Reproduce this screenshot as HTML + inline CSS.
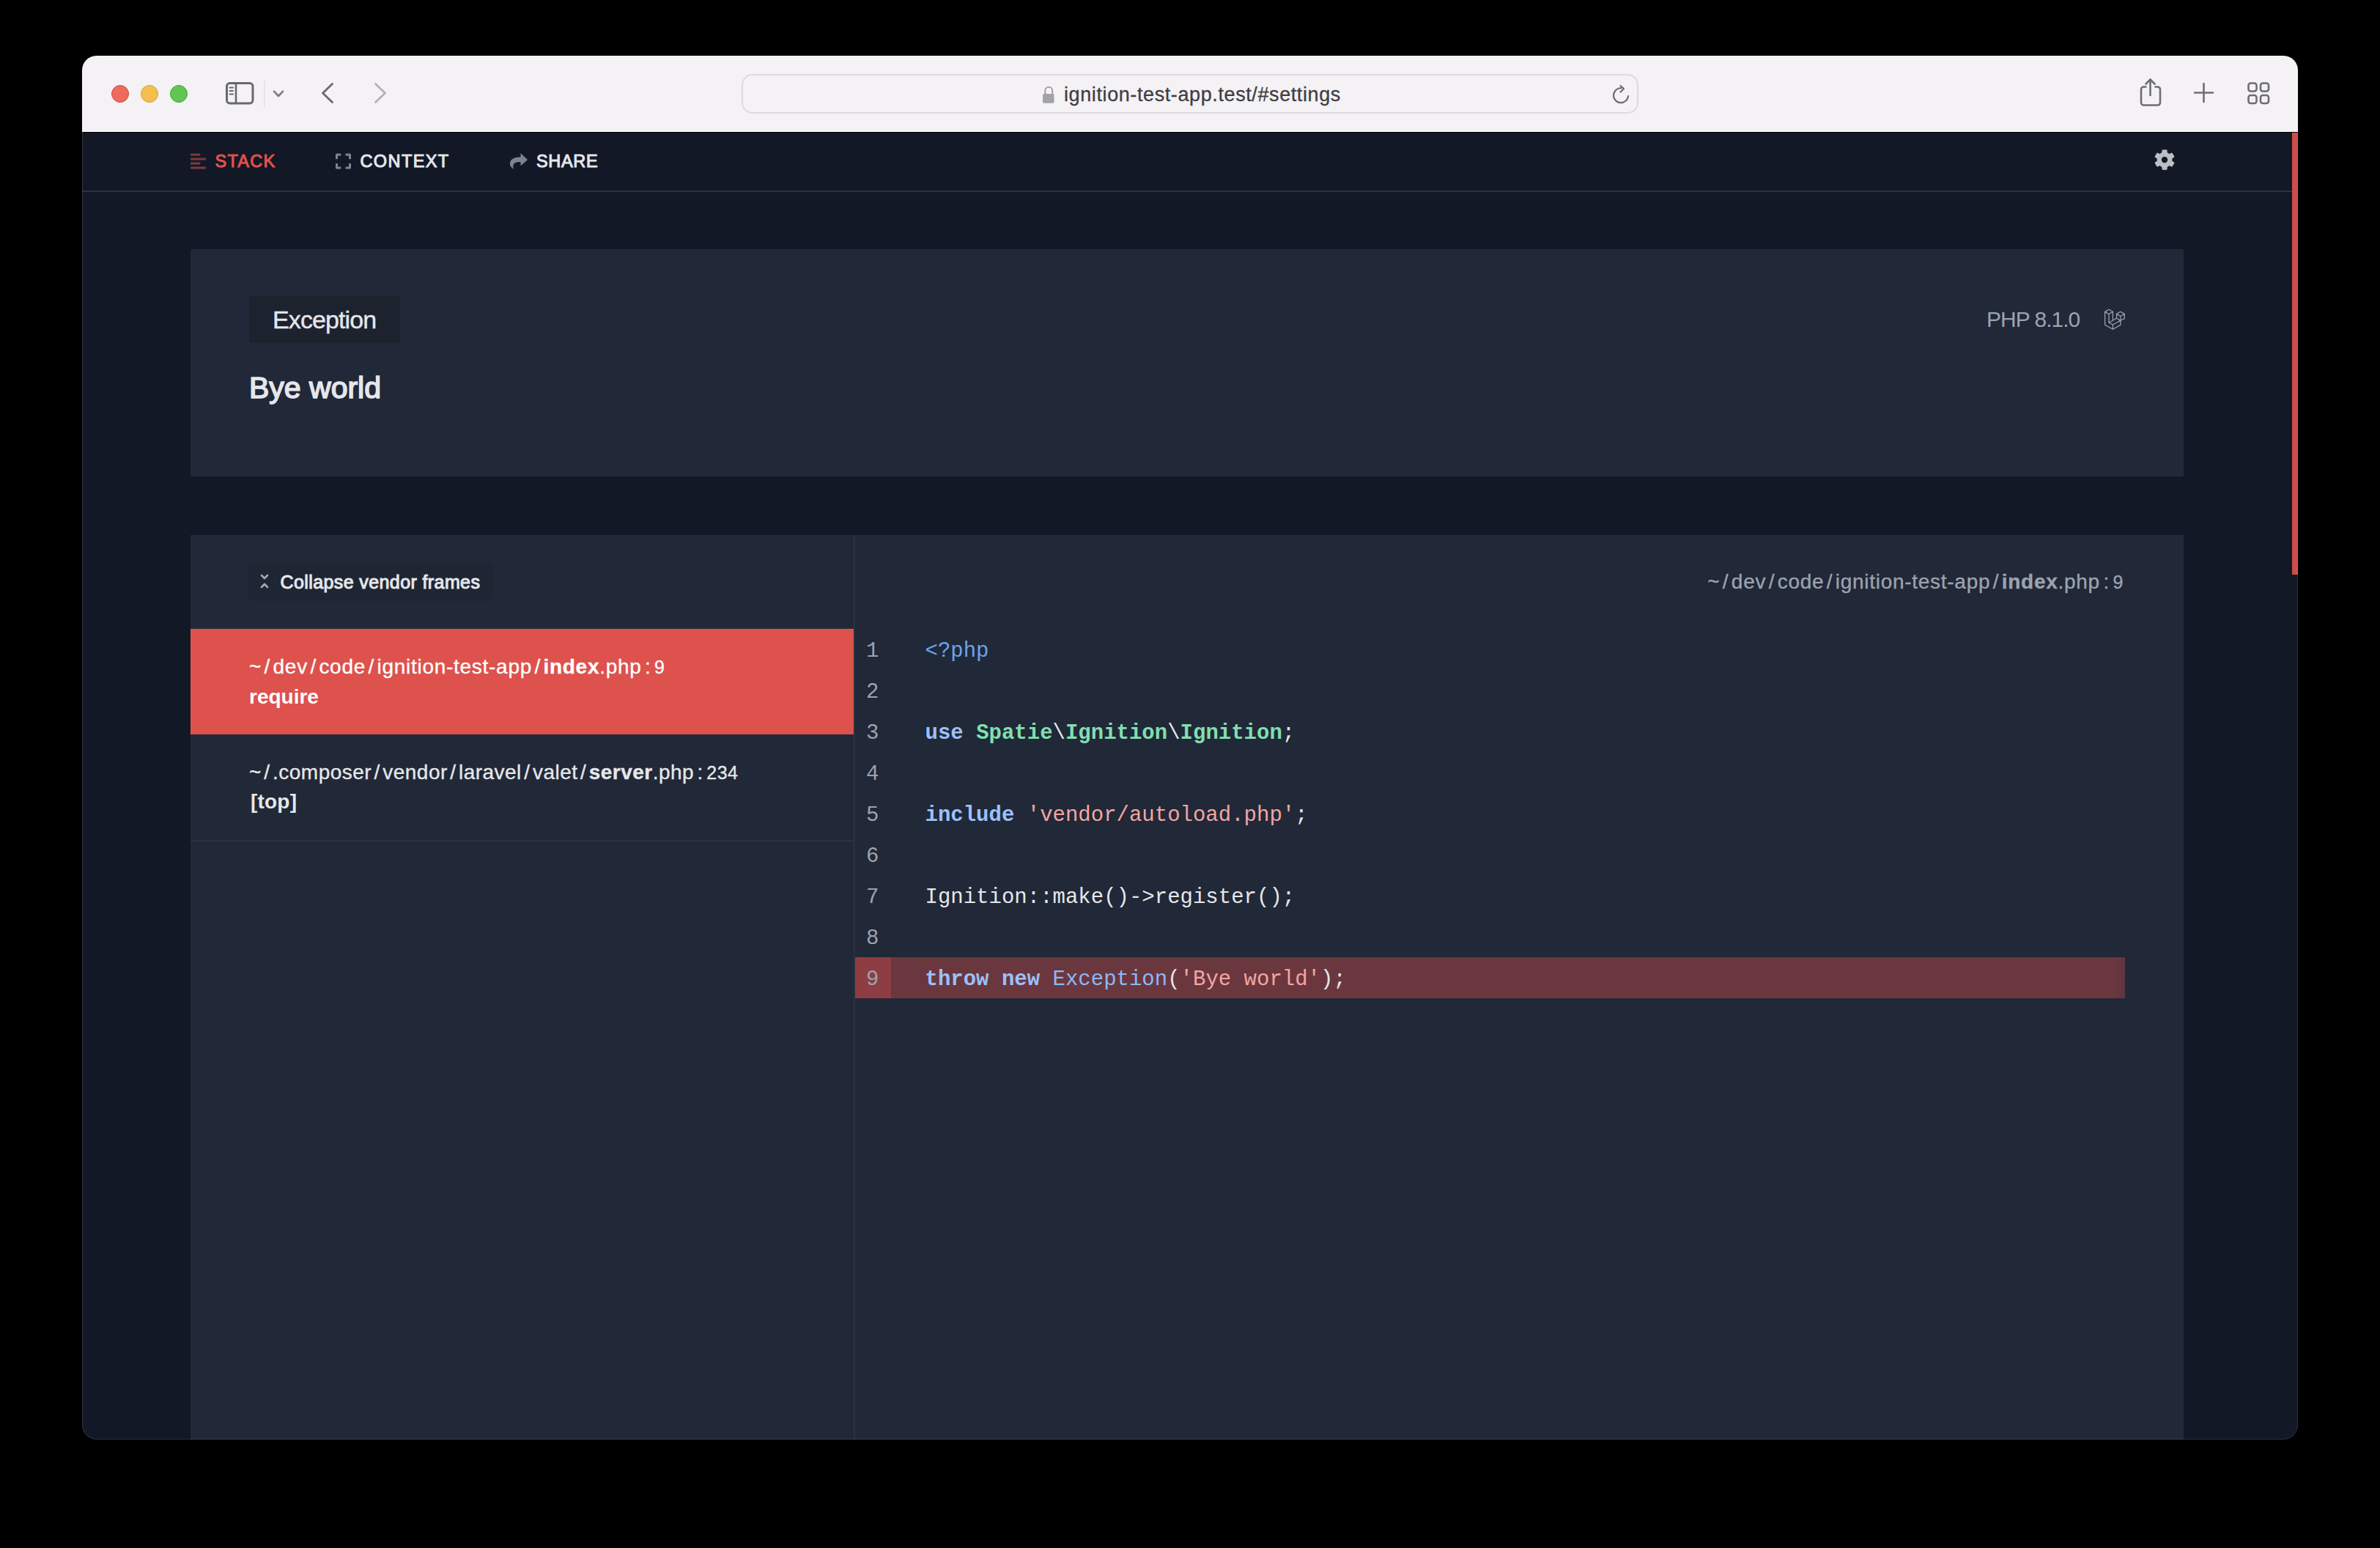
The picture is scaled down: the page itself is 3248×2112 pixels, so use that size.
<!DOCTYPE html>
<html><head><meta charset="utf-8">
<style>
html,body{margin:0;padding:0;background:#000;width:3248px;height:2112px;overflow:hidden}
body{font-family:"Liberation Sans",sans-serif;position:relative}
.a{position:absolute;white-space:pre;line-height:1}
#win{position:absolute;left:112px;top:76px;width:3024px;height:1888px;border-radius:20px;overflow:hidden;background:#121826}
#in{position:absolute;left:-112px;top:-76px;width:3248px;height:2112px}
.bx{position:absolute}
.tl{position:absolute;top:116px;width:24px;height:24px;border-radius:50%;box-sizing:border-box}
.mono{font-family:"Liberation Mono",monospace}
.sl{margin:0 3.5px}
.cl{margin:0 4.5px}
.code{position:absolute;left:1262.5px;font-family:"Liberation Mono",monospace;font-size:29px;line-height:56px;white-space:pre;color:#e5e7eb}
.ln{position:absolute;left:1182px;font-family:"Liberation Mono",monospace;font-size:29px;line-height:56px;color:#9ca3af}
.kw{color:#9bc1fa;font-weight:700}
.cls{color:#80dfb0;font-weight:700}
.str{color:#f2a6a3}
</style></head><body>
<div id="win"><div id="in">
  <!-- toolbar -->
  <div class="bx" style="left:112px;top:76px;width:3024px;height:104px;background:#f4f2f5"></div>
  <div class="tl" style="left:152px;background:#ed6a5e;border:1px solid #d24a3f"></div>
  <div class="tl" style="left:192px;background:#f4bf4f;border:1px solid #d79f33"></div>
  <div class="tl" style="left:232px;background:#61c554;border:1px solid #40a63a"></div>
  <!-- sidebar icon -->
  <svg class="bx" style="left:300px;top:104px" width="100" height="46" viewBox="300 104 100 46">
    <rect x="309.5" y="113.5" width="35.5" height="27.5" rx="4.2" fill="none" stroke="#69686c" stroke-width="3"/>
    <line x1="322" y1="113" x2="322" y2="141" stroke="#69686c" stroke-width="2.6"/>
    <g stroke="#69686c" stroke-width="2" stroke-linecap="round"><line x1="313.5" y1="119.5" x2="318" y2="119.5"/><line x1="313.5" y1="124" x2="318" y2="124"/><line x1="313.5" y1="128.5" x2="318" y2="128.5"/></g>
    <line x1="361" y1="110" x2="361" y2="146" stroke="#e1dfe2" stroke-width="1.5"/>
    <polyline points="374,124.6 380,131 386,124.6" fill="none" stroke="#7c7b80" stroke-width="2.6" stroke-linecap="round" stroke-linejoin="round"/>
  </svg>
  <svg class="bx" style="left:430px;top:104px" width="110" height="46" viewBox="430 104 110 46">
    <polyline points="453.5,114.5 440.5,127 453.5,139.5" fill="none" stroke="#69686c" stroke-width="2.8" stroke-linecap="round" stroke-linejoin="round"/>
    <polyline points="512.5,114.5 525.5,127 512.5,139.5" fill="none" stroke="#b2b1b4" stroke-width="2.8" stroke-linecap="round" stroke-linejoin="round"/>
  </svg>
  <!-- url bar -->
  <div class="bx" style="left:1012px;top:101px;width:1224px;height:54px;box-sizing:border-box;border:2px solid #dcdadd;border-radius:15px"></div>
  <svg class="bx" style="left:1420px;top:114px" width="24" height="30" viewBox="1420 114 24 30">
    <path d="M1426.3,128.5 v-4.8 a4.95,4.95 0 0 1 9.9,0 v4.8" fill="none" stroke="#a3a2a5" stroke-width="2.1"/>
    <rect x="1423" y="128" width="15.6" height="12.8" rx="2" fill="#a3a2a5"/>
  </svg>
  <div class="a" style="left:1452px;top:116.2px;font-size:27px;color:#3f3e41;letter-spacing:0.6px;-webkit-text-stroke:0.3px #3f3e41">ignition-test-app.test/#settings</div>
  <svg class="bx" style="left:2196px;top:111.5px" width="34" height="36" viewBox="2195 110 34 36">
    <path d="M2221,129 a10,10 0 1 1 -9.5,-10.8" fill="none" stroke="#6f6e71" stroke-width="2.2" stroke-linecap="round"/>
    <polyline points="2210.5,115 2215,119 2210.5,123.5" fill="none" stroke="#6f6e71" stroke-width="2.2" stroke-linecap="round" stroke-linejoin="round"/>
  </svg>
  <!-- right toolbar icons -->
  <svg class="bx" style="left:2910px;top:100px" width="200" height="50" viewBox="2910 100 200 50">
    <g fill="none" stroke="#6e6d71" stroke-width="2.6" stroke-linecap="round" stroke-linejoin="round">
      <path d="M2928.5,118.5 h-3 a3.5,3.5 0 0 0 -3.5,3.5 v18 a3.5,3.5 0 0 0 3.5,3.5 h19 a3.5,3.5 0 0 0 3.5,-3.5 v-18 a3.5,3.5 0 0 0 -3.5,-3.5 h-3"/>
      <line x1="2934.5" y1="108.5" x2="2934.5" y2="130"/>
      <polyline points="2928.5,114.5 2934.5,108.5 2940.5,114.5"/>
      <line x1="3007.5" y1="114" x2="3007.5" y2="139"/>
      <line x1="2995" y1="126.5" x2="3020" y2="126.5"/>
      <rect x="3068.5" y="113.5" width="11" height="11" rx="3"/>
      <rect x="3085" y="113.5" width="11" height="11" rx="3"/>
      <rect x="3068.5" y="130" width="11" height="11" rx="3"/>
      <rect x="3085" y="130" width="11" height="11" rx="3"/>
    </g>
  </svg>
  <div class="bx" style="left:112px;top:180px;width:3024px;height:1px;background:#000"></div>

  <!-- page -->
  <div class="bx" style="left:112px;top:181px;width:3016px;height:1783px;background:#121826"></div>
  <!-- nav -->
  <div class="bx" style="left:112px;top:260px;width:3016px;height:2px;background:#2c3240"></div>
  <svg class="bx" style="left:258px;top:206px" width="26" height="28" viewBox="258 206 26 28">
    <g fill="#7f3a3c"><rect x="260" y="209.5" width="13.4" height="3" rx="1"/><rect x="260" y="215.5" width="21" height="3" rx="1"/><rect x="260" y="221.5" width="13.4" height="3" rx="1"/><rect x="260" y="227.6" width="21" height="3" rx="1"/></g>
  </svg>
  <div class="a" style="left:293.5px;top:208.6px;font-size:23.5px;color:#e0524c;-webkit-text-stroke:1px #e0524c;letter-spacing:1.25px">STACK</div>
  <svg class="bx" style="left:452px;top:202px" width="36" height="36" viewBox="452 202 36 36">
    <g fill="none" stroke="#7f848d" stroke-width="3" stroke-linejoin="round"><polyline points="459.5,217 459.5,210.9 465.3,210.9"/><polyline points="471.5,210.9 477.5,210.9 477.5,217"/><polyline points="459.5,222.9 459.5,229.1 465.3,229.1"/><polyline points="471.5,229.1 477.5,229.1 477.5,222.9"/></g>
  </svg>
  <div class="a" style="left:491.5px;top:208.6px;font-size:23.5px;color:#e5e7eb;-webkit-text-stroke:1px #e5e7eb;letter-spacing:1.4px">CONTEXT</div>
  <svg class="bx" style="left:690px;top:202px" width="36" height="36" viewBox="690 202 36 36">
    <path d="M720,218 L710.5,209 V214.2 C702,214.2 696,217 695.9,223.5 C695.9,226.5 698,229 700.8,230.8 C700.2,228 700,225.5 701.2,223.8 C702.8,221.6 706,221.1 710.5,221.1 V226.2 Z" fill="#7e838c"/>
  </svg>
  <div class="a" style="left:732px;top:208.6px;font-size:23.5px;color:#e5e7eb;-webkit-text-stroke:1px #e5e7eb;letter-spacing:0.65px">SHARE</div>
  <!-- gear -->
  <svg class="bx" style="left:2938px;top:201px" width="32" height="34" viewBox="-16 -17 32 34">
    <g fill="#bcbfc4">
      <circle r="10.5"/>
      <rect x="-3.6" y="-13.8" width="7.2" height="6.6" rx="1.4" transform="rotate(0)"/><rect x="-3.6" y="-13.8" width="7.2" height="6.6" rx="1.4" transform="rotate(60)"/><rect x="-3.6" y="-13.8" width="7.2" height="6.6" rx="1.4" transform="rotate(120)"/><rect x="-3.6" y="-13.8" width="7.2" height="6.6" rx="1.4" transform="rotate(180)"/><rect x="-3.6" y="-13.8" width="7.2" height="6.6" rx="1.4" transform="rotate(240)"/><rect x="-3.6" y="-13.8" width="7.2" height="6.6" rx="1.4" transform="rotate(300)"/>
    </g>
    <circle r="4.2" fill="#121826"/>
  </svg>
  <!-- scrollbar -->
  <div class="bx" style="left:3128px;top:181px;width:8px;height:603px;background:#cc4d4b"></div>

  <!-- card 1 -->
  <div class="bx" style="left:260px;top:340px;width:2720px;height:310px;background:#212837"></div>
  <div class="bx" style="left:340px;top:404px;width:206px;height:64px;background:#1d222f;border-radius:3.5px"></div>
  <div class="a" style="left:372px;top:419px;font-size:34px;color:#e5e7eb;letter-spacing:-0.9px;-webkit-text-stroke:0.4px #e5e7eb">Exception</div>
  <div class="a" style="left:340px;top:509px;font-size:41px;color:#e5e7eb;-webkit-text-stroke:1.6px #e5e7eb">Bye world</div>
  <div class="a" style="left:2711px;top:420.5px;font-size:30px;color:#9ca3af;letter-spacing:-1px">PHP 8.1.0</div>
  <svg class="bx" style="left:2866px;top:416px" width="40" height="40" viewBox="0 0 40 40"><path d="M12.0,6.3 L17.4,9.2 L12.0,12.5 L6.6,9.4 L12.0,6.3 M6.6,9.4 L6.6,27.3 L17.4,33.3 L27.8,27.4 L27.8,21.3 M12.0,12.5 L12.0,24.2 L22.5,18.2 M17.4,9.2 L17.4,20.7 M12.0,24.2 L17.4,27.0 L27.8,21.3 L22.5,18.2 M17.4,27.0 L17.4,33.3 M27.8,9.2 L33.3,12.4 L27.8,15.5 L22.5,12.4 L27.8,9.2 M22.5,12.4 L22.5,18.2 M27.8,15.5 L27.8,21.3 M33.3,12.4 L33.3,18.6 L27.8,21.3" fill="none" stroke="#9ca3af" stroke-width="1.25" stroke-linejoin="round" stroke-linecap="round"/></svg>

  <!-- card 2 -->
  <div class="bx" style="left:260px;top:730px;width:2720px;height:1240px;background:#212837"></div>
  <div class="bx" style="left:1165px;top:730px;width:2px;height:1240px;background:#2a313d"></div>
  <!-- collapse button -->
  <div class="bx" style="left:340px;top:768px;width:332px;height:49px;background:#1e2533;border-radius:5px;box-shadow:0 1px 3px rgba(0,0,0,0.15)"></div>
  <svg class="bx" style="left:352px;top:780px" width="18" height="26" viewBox="352 780 18 26">
    <g fill="none" stroke="#a2a8b3" stroke-width="2.7" stroke-linecap="round" stroke-linejoin="round"><polyline points="357,785 361,789 365,785"/><polyline points="357,801 361,797 365,801"/></g>
  </svg>
  <div class="a" style="left:382.5px;top:781.5px;font-size:25px;color:#e5e7eb;-webkit-text-stroke:1px #e5e7eb;letter-spacing:0.4px">Collapse vendor frames</div>
  <div class="bx" style="left:260px;top:856px;width:905px;height:2px;background:#262d3a"></div>
  <!-- frame 1 -->
  <div class="bx" style="left:260px;top:858px;width:905px;height:144px;background:#dd524d"></div>
  <div class="a" style="left:340px;top:896px;font-size:28px;color:#fff;letter-spacing:0.72px;-webkit-text-stroke:0.35px #fff">~<span class="sl">/</span>dev<span class="sl">/</span>code<span class="sl">/</span>ignition-test-app<span class="sl">/</span><b>index</b>.php<span class="cl">:</span><span style="font-size:25px">9</span></div>
  <div class="a" style="left:340px;top:937px;font-size:28px;font-weight:700;color:#fff">require</div>
  <!-- frame 2 -->
  <div class="a" style="left:340px;top:1040px;font-size:28px;color:#e5e7eb;letter-spacing:0.47px;-webkit-text-stroke:0.35px #e5e7eb">~<span class="sl">/</span>.composer<span class="sl">/</span>vendor<span class="sl">/</span>laravel<span class="sl">/</span>valet<span class="sl">/</span><b>server</b>.php<span class="cl">:</span><span style="font-size:25px">234</span></div>
  <div class="a" style="left:342px;top:1080px;font-size:28px;font-weight:700;color:#e5e7eb;letter-spacing:0.2px">[top]</div>
  <div class="bx" style="left:260px;top:1146px;width:905px;height:2px;background:#2c3340"></div>

  <!-- code header path -->
  <div class="a" style="right:350px;top:780px;font-size:28px;color:#9ca3af;letter-spacing:0.72px;-webkit-text-stroke:0.35px #9ca3af">~<span class="sl">/</span>dev<span class="sl">/</span>code<span class="sl">/</span>ignition-test-app<span class="sl">/</span><b>index</b>.php<span class="cl">:</span><span style="font-size:25px">9</span></div>

  <!-- code -->
  <div class="bx" style="left:1167px;top:1306px;width:1733px;height:56px;background:linear-gradient(to right,#6b373e 0,#6b373e 1718px,#5f3540 1733px)"></div>
  <div class="bx" style="left:1167px;top:1306px;width:49px;height:56px;background:#8e3d42"></div>
  <div class="ln" style="top:861px">1</div>
  <div class="ln" style="top:917px">2</div>
  <div class="ln" style="top:973px">3</div>
  <div class="ln" style="top:1029px">4</div>
  <div class="ln" style="top:1085px">5</div>
  <div class="ln" style="top:1141px">6</div>
  <div class="ln" style="top:1197px">7</div>
  <div class="ln" style="top:1253px">8</div>
  <div class="ln" style="top:1309px">9</div>
  <div class="code" style="top:861px"><span style="color:#69a5f2">&lt;?php</span></div>
  <div class="code" style="top:973px"><span class="kw">use</span> <span class="cls">Spatie</span>\<span class="cls">Ignition</span>\<span class="cls">Ignition</span>;</div>
  <div class="code" style="top:1085px"><span class="kw">include</span> <span class="str">'vendor/autoload.php'</span>;</div>
  <div class="code" style="top:1197px">Ignition::make()-&gt;register();</div>
  <div class="code" style="top:1309px"><span class="kw">throw</span> <span class="kw">new</span> <span style="color:#8cb8f6">Exception</span>(<span class="str">'Bye world'</span>);</div>
</div></div>
<div style="position:absolute;left:112px;top:76px;width:3024px;height:1888px;box-sizing:border-box;border:1px solid rgba(255,255,255,0.12);border-radius:20px;pointer-events:none"></div>
</body></html>
